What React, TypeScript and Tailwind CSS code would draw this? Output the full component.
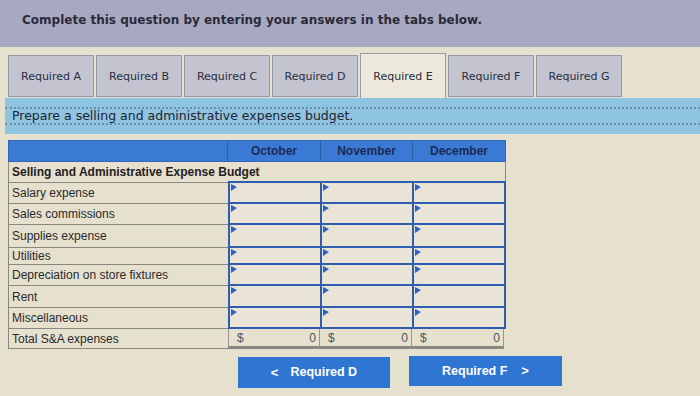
import React from "react";

const tabs = ["Required A", "Required B", "Required C", "Required D", "Required E", "Required F", "Required G"];
const rows = [
  "Salary expense",
  "Sales commissions",
  "Supplies expense",
  "Utilities",
  "Depreciation on store fixtures",
  "Rent",
  "Miscellaneous",
];
const rowH = [21, 21, 23, 17, 21, 22, 21];

function Flag() {
  return (
    <svg className="absolute left-[1px] top-[1px]" width="6" height="7" viewBox="0 0 6 7">
      <path d="M0 0 L6 3 L0 7 Z" fill="#2a63c4" />
    </svg>
  );
}

function InputCell({ w, h }: { w: string; h: number }) {
  return (
    <div className={`relative ${w} border-2 border-[#2f5db0] -mt-[2px] bg-[#e9e4d5]`} style={{ height: h + 2 }}>
      <Flag />
    </div>
  );
}

export default function App() {
  return (
    <div className="w-[700px] h-[396px] overflow-hidden bg-[#e6e0cf] flex flex-col" style={{ fontFamily: "'Liberation Sans', Arial, sans-serif" }}>
      <div className="h-[47px] bg-[#a8a9c1] pl-[22px] pt-[7px] shrink-0">
        <span className="text-[12px] font-bold text-[#2a2a3a]" style={{ fontFamily: "'DejaVu Sans', Verdana, sans-serif" }}>
          Complete this question by entering your answers in the tabs below.
        </span>
      </div>
      <div className="h-[51px] flex items-end pl-[8px] gap-[2px] shrink-0">
        {tabs.map((t) => {
          const active = t === "Required E";
          return (
            <div
              key={t}
              className={
                active
                  ? "w-[86px] h-[45px] bg-[#ece8dc] border border-b-0 border-[#9a9aa6] flex items-center justify-center"
                  : "w-[86px] h-[42px] mb-[1px] bg-[#c3c4d0] border border-[#9396a6] flex items-center justify-center"
              }
            >
              <span className="text-[11px] text-[#2a2d40] mt-[2px]" style={{ fontFamily: "'DejaVu Sans', Verdana, sans-serif" }}>
                {t}
              </span>
            </div>
          );
        })}
      </div>
      <div className="ml-[5px] h-[36px] bg-[#8fc4e1] pt-[9px] shrink-0">
        <div className="h-[18px] border-y-2 border-dotted border-[#6d8fb0] pl-[7px] flex items-center">
          <span className="text-[12.5px] text-[#1e2330]" style={{ fontFamily: "'DejaVu Sans', Verdana, sans-serif" }}>
            Prepare a selling and administrative expenses budget.
          </span>
        </div>
      </div>
      <div className="ml-[8px] mt-[6px] w-[498px] flex flex-col text-[12px] text-[#2a2a2a]">
        <div className="flex h-[22px] bg-[#3b7ad4] border border-[#3266b8]">
          <div className="w-[219px] border-r border-[#2d5ea8]" />
          <div className="w-[93px] border-r border-[#2d5ea8] flex items-center justify-center font-bold text-[#1b2a56]">October</div>
          <div className="w-[92px] border-r border-[#2d5ea8] flex items-center justify-center font-bold text-[#1b2a56]">November</div>
          <div className="flex-1 flex items-center justify-center font-bold text-[#1b2a56]">December</div>
        </div>
        <div className="h-[21px] border-x border-b border-[#8a8780] flex items-center pl-[3px] font-bold text-[#222]">
          Selling and Administrative Expense Budget
        </div>
        {rows.map((r, i) => (
          <div key={r} className="flex" style={{ height: rowH[i] }}>
            <div className="w-[220px] border-l border-b border-[#8a8780] flex items-center pl-[3px]">{r}</div>
            <InputCell w="w-[94px]" h={rowH[i]} />
            <InputCell w="w-[94px] -ml-[2px]" h={rowH[i]} />
            <InputCell w="w-[94px] -ml-[2px]" h={rowH[i]} />
          </div>
        ))}
        <div className="flex h-[20px]">
          <div className="w-[220px] border-l border-b border-[#8a8780] flex items-center pl-[3px]">Total S&amp;A expenses</div>
          {[0, 1, 2].map((k) => (
            <div
              key={k}
              className="w-[92px] border-r border-[#9a978f] border-b-[3px] border-b-[#8a8780] flex items-center justify-between px-[8px] pr-[3px] text-[#555]"
              style={k === 0 ? { borderLeft: "1px solid #9a978f" } : undefined}
            >
              <span>$</span>
              <span>0</span>
            </div>
          ))}
        </div>
      </div>
      <div className="flex ml-[238px] mt-[8px] gap-[19px] items-start">
        <div className="w-[152px] h-[31px] bg-[#2f76d2] flex items-center justify-center text-white font-bold text-[12.5px] gap-[12px]">
          <span className="text-[13px]">&lt;</span>
          <span>Required D</span>
        </div>
        <div className="w-[153px] h-[30px] -mt-[1px] bg-[#2f76d2] flex items-center justify-center text-white font-bold text-[12.5px] gap-[14px]">
          <span>Required F</span>
          <span className="text-[13px]">&gt;</span>
        </div>
      </div>
    </div>
  );
}
